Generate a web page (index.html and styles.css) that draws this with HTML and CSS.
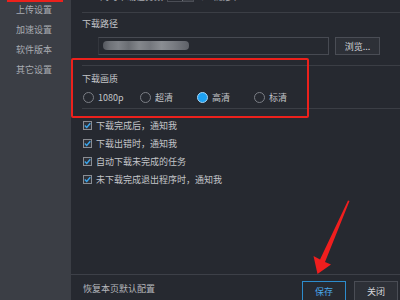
FILE: index.html
```html
<!DOCTYPE html>
<html lang="zh-CN">
<head>
<meta charset="utf-8">
<title>下载设置</title>
<link rel="stylesheet" href="styles.css">
</head>
<body>
<div class="app">
  <aside class="side">
    <div class="nav-item">上传设置</div>
    <div class="nav-item">加速设置</div>
    <div class="nav-item">软件版本</div>
    <div class="nav-item">其它设置</div>
  </aside>
  <main class="main">
    <div class="content">
      <div class="sec sec-top">
        <div class="cut-row"><span>同时下载任务数</span><span class="mini-box"><span class="mini-btn"></span></span><span>个（最多）</span></div>
      </div>
      <div class="sec sec-path">
        <div class="label">下载路径</div>
        <div class="path-row">
          <div class="input"><div class="mosaic"></div></div>
          <button class="btn">浏览...</button>
        </div>
      </div>
      <div class="sec sec-quality">
        <div class="label label-q">下载画质</div>
        <div class="radios">
          <label class="radio"><span class="dot"></span>1080p</label>
          <label class="radio"><span class="dot"></span>超清</label>
          <label class="radio"><span class="dot on"></span>高清</label>
          <label class="radio"><span class="dot"></span>标清</label>
        </div>
      </div>
      <div class="checks">
        <div class="check"><span class="box"><svg viewBox="0 0 9 9" width="9" height="9"><path d="M1.8 4.6 L3.7 6.4 L7.3 2.3" fill="none" stroke="#3ba7ee" stroke-width="1.4"/></svg></span>下载完成后，通知我</div>
        <div class="check"><span class="box"><svg viewBox="0 0 9 9" width="9" height="9"><path d="M1.8 4.6 L3.7 6.4 L7.3 2.3" fill="none" stroke="#3ba7ee" stroke-width="1.4"/></svg></span>下载出错时，通知我</div>
        <div class="check"><span class="box"><svg viewBox="0 0 9 9" width="9" height="9"><path d="M1.8 4.6 L3.7 6.4 L7.3 2.3" fill="none" stroke="#3ba7ee" stroke-width="1.4"/></svg></span>自动下载未完成的任务</div>
        <div class="check"><span class="box"><svg viewBox="0 0 9 9" width="9" height="9"><path d="M1.8 4.6 L3.7 6.4 L7.3 2.3" fill="none" stroke="#3ba7ee" stroke-width="1.4"/></svg></span>未下载完成退出程序时，通知我</div>
      </div>
    </div>
    <footer class="footer">
      <span class="reset">恢复本页默认配置</span>
      <button class="btn fbtn save">保存</button>
      <button class="btn fbtn">关闭</button>
    </footer>
  </main>
  <div class="mark-bar"></div>
  <div class="mark-box"></div>
  <svg class="arrow" viewBox="0 0 400 300" width="400" height="300">
    <polygon points="349.5,201 325,262 331,264.5 317.5,274 313.5,256 320,259.5 348,200.5" fill="#f01e1e"/>
  </svg>
</div>
</body>
</html>
```

FILE: styles.css
```css
* { box-sizing: border-box; }
body {
  margin: 0;
  width: 400px;
  height: 300px;
  overflow: hidden;
  background: #262930;
  font-family: "Noto Sans CJK SC", "Noto Sans", sans-serif;
  font-size: 9px;
  color: #c3c5c9;
}
.app {
  position: relative;
  display: flex;
  width: 400px;
  height: 300px;
}
.side {
  width: 71px;
  flex: none;
  background: #3b3e45;
}
.nav-item {
  height: 20px;
  line-height: 20px;
  padding-left: 16px;
  color: #a9acb2;
  white-space: nowrap;
}
.main {
  flex: 1;
  display: flex;
  flex-direction: column;
  min-width: 0;
}
.content {
  flex: 1;
  margin-left: 11px;
}
.sec {
  border-bottom: 1px solid #3b3e45;
}
.sec-top {
  height: 13px;
  overflow: hidden;
}
.cut-row {
  display: flex;
  align-items: center;
  gap: 4px;
  height: 12px;
  margin-top: -10px;
  padding-left: 18px;
  color: #a9acb2;
  white-space: nowrap;
}
.mini-box {
  display: flex;
  justify-content: flex-end;
  width: 27px;
  height: 14px;
  margin-top: -3px;
  border: 1px solid #4a4d55;
}
.mini-btn {
  width: 11px;
  border-left: 1px solid #6a6d74;
  background: #3a3d44;
}
.label {
  line-height: 12px;
  margin-top: 5px;
  color: #c3c5c9;
}
.path-row {
  display: flex;
  gap: 6px;
  margin-top: 7px;
  padding: 0 0 10px 16px;
}
.input {
  width: 231px;
  height: 18px;
  border: 1px solid #474a52;
  border-left-color: #33363d;
  background: #262930;
  padding: 3px 0 0 4px;
}
.mosaic {
  width: 86px;
  height: 9px;
  border-radius: 4px;
  background: linear-gradient(90deg, #55585f 0, #6f7278 8%, #7e8187 18%, #6a6d73 30%, #84878c 42%, #74777d 55%, #8a8d92 68%, #797c82 82%, #5e6168 100%);
  filter: blur(0.7px);
}
.btn {
  font-family: inherit;
  font-size: 9px;
  height: 18px;
  padding: 0;
  border: 1px solid #4a4d55;
  background: #2d3037;
  color: #d4d6da;
  border-radius: 0;
}
.path-row .btn {
  width: 45px;
}
.label-q {
  margin-top: 7px;
}
.radios {
  display: grid;
  grid-template-columns: repeat(4, 57px);
  margin-top: 6px;
  padding: 0 0 5px 1px;
}
.radio {
  display: flex;
  align-items: center;
  gap: 4px;
  height: 12px;
  white-space: nowrap;
}
.dot {
  width: 11px;
  height: 11px;
  border-radius: 50%;
  border: 1px solid #7b7e85;
  flex: none;
}
.dot.on {
  background: #1ea1f2;
  border-color: #a4d6f8;
}
.checks {
  margin-top: 7px;
}
.check {
  display: flex;
  align-items: center;
  gap: 4px;
  height: 18px;
  padding-left: 1px;
  white-space: nowrap;
}
.box {
  width: 9px;
  height: 9px;
  flex: none;
  border: 1px solid #8a8d93;
  background: #2f3239;
  display: flex;
  align-items: center;
  justify-content: center;
}
.box svg {
  display: block;
  flex: none;
}
.footer {
  height: 26px;
  border-top: 1px solid #3d4048;
  display: flex;
  align-items: flex-start;
  padding: 6px 2px 0 12px;
  gap: 8px;
}
.reset {
  flex: 1;
  line-height: 16px;
  color: #b5b7bc;
}
.fbtn {
  width: 44px;
  height: 20px;
  font-size: 9px;
}
.save {
  border-color: #2d8ccd;
  background: #262930;
  color: #4aa6e6;
}
.mark-bar {
  position: absolute;
  left: 7px;
  top: 0;
  width: 56px;
  height: 2px;
  background: #ec211c;
}
.mark-box {
  position: absolute;
  left: 71px;
  top: 58px;
  width: 238px;
  height: 60px;
  border: 2px solid #ec211c;
  border-radius: 2px;
}
.arrow {
  position: absolute;
  left: 0;
  top: 0;
  pointer-events: none;
}
```
